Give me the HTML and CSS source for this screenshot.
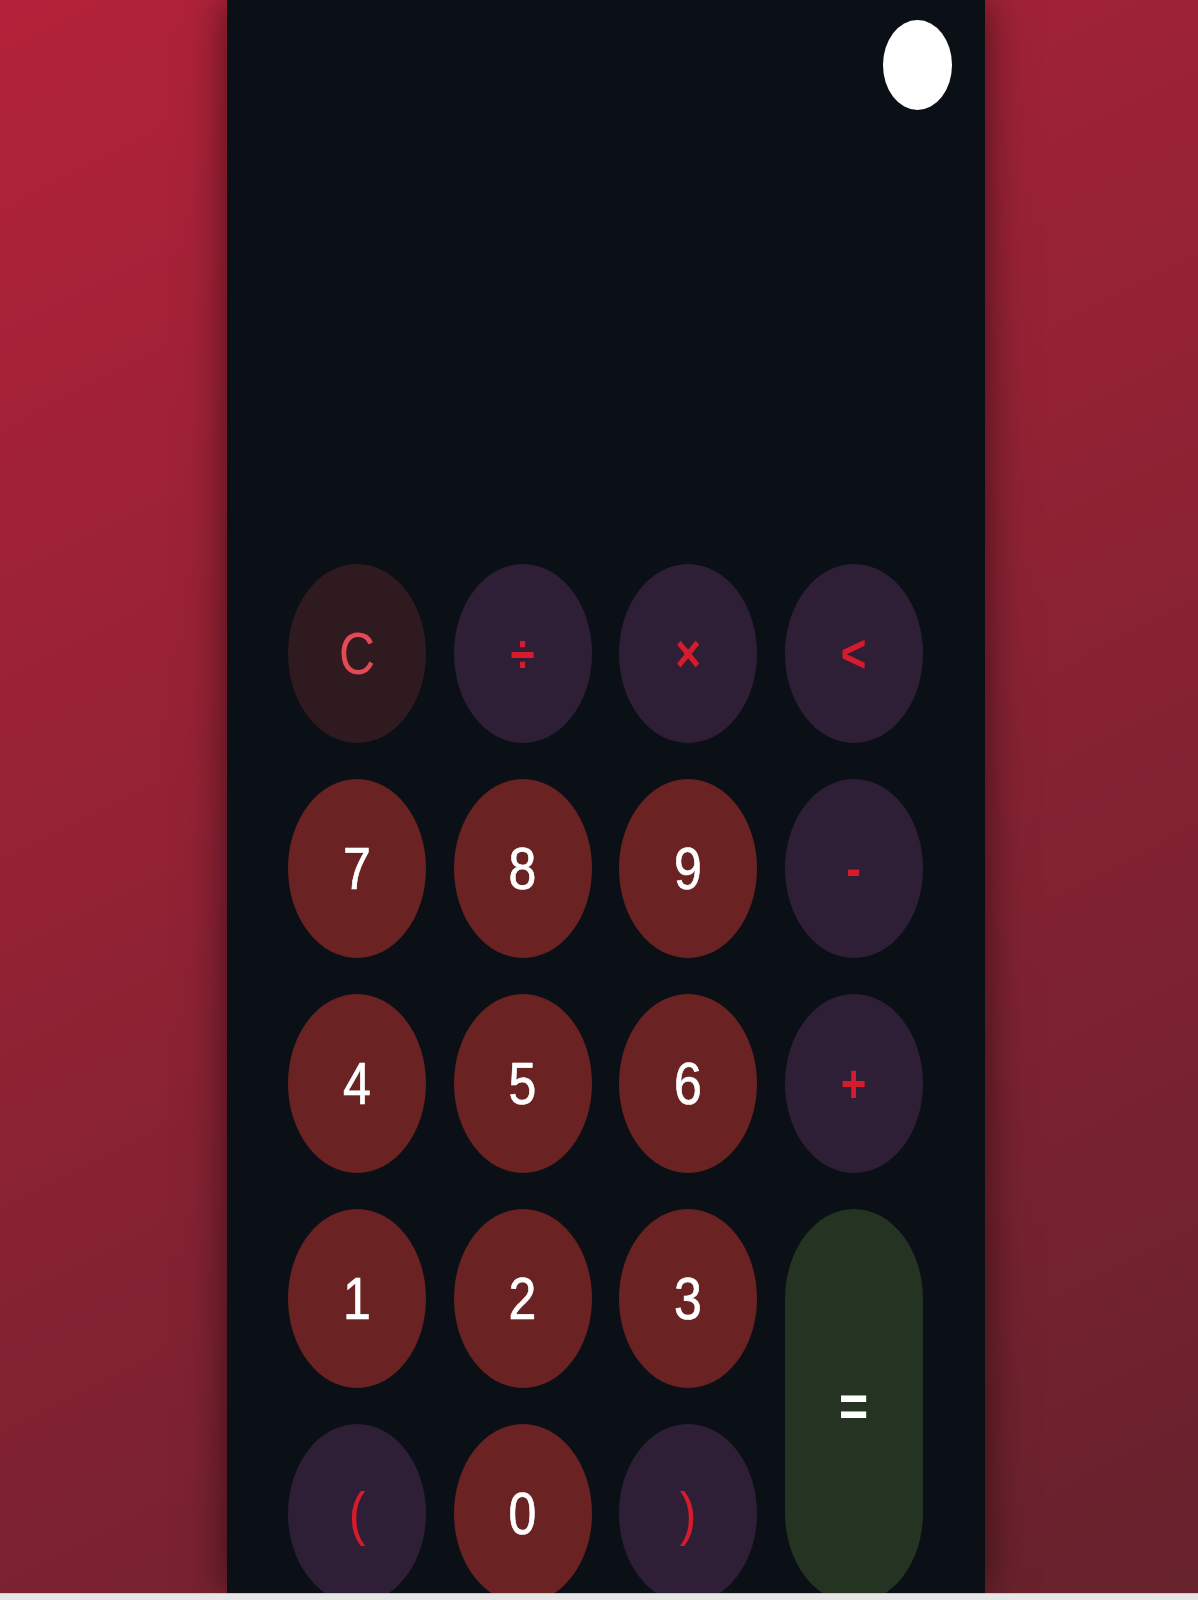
FILE: index.html
```html
<!DOCTYPE html>
<html lang="en">
<head>
<meta charset="utf-8">
<title>Calculator</title>
<link rel="stylesheet" href="styles.css">
</head>
<body>
<div class="page">
  <main class="calc">
    <div class="display">
      <span class="toggle"></span>
    </div>
    <div class="keys">
      <button class="key clear"><span>C</span></button>
      <button class="key op bold"><span>÷</span></button>
      <button class="key op bold"><span>×</span></button>
      <button class="key op bold"><span>&lt;</span></button>

      <button class="key num"><span>7</span></button>
      <button class="key num"><span>8</span></button>
      <button class="key num"><span>9</span></button>
      <button class="key op bold"><span>-</span></button>

      <button class="key num"><span>4</span></button>
      <button class="key num"><span>5</span></button>
      <button class="key num"><span>6</span></button>
      <button class="key op bold"><span>+</span></button>

      <button class="key num"><span>1</span></button>
      <button class="key num"><span>2</span></button>
      <button class="key num"><span>3</span></button>
      <button class="key equals"><span>=</span></button>

      <button class="key op"><span>(</span></button>
      <button class="key num"><span>0</span></button>
      <button class="key op"><span>)</span></button>
    </div>
  </main>
</div>
<div class="strip"></div>
</body>
</html>
```
FILE: styles.css
```css
html, body {
  margin: 0;
  padding: 0;
}

body {
  background: #e6e6e6;
  font-family: "Liberation Sans", Arial, sans-serif;
  overflow: hidden;
}

.page {
  height: 1593px;
  overflow: hidden;
  background: linear-gradient(153deg, #b3223a 0%, #66222d 100%);
}

.calc {
  margin-left: 227px;
  width: 758px;
  height: 1593px;
  background: #0a1016;
  box-shadow: 0 0 40px rgba(0, 0, 0, 0.55);
  overflow: hidden;
}

.display {
  height: 564px;
  box-sizing: border-box;
  display: flex;
  justify-content: flex-end;
  align-items: flex-start;
  padding: 20px 33px 0 0;
}

.toggle {
  display: block;
  width: 69px;
  height: 90px;
  border-radius: 50%;
  background: #ffffff;
}

.keys {
  display: grid;
  grid-template-columns: repeat(4, 138px);
  grid-auto-rows: 179px;
  column-gap: 27.5px;
  row-gap: 36px;
  padding-left: 61px;
}

.key {
  border: none;
  margin: 0;
  padding: 0;
  border-radius: 50%;
  display: flex;
  align-items: center;
  justify-content: center;
  font-family: "Liberation Sans", Arial, sans-serif;
  font-size: 50px;
  line-height: 1;
  cursor: pointer;
}

.key span {
  display: inline-block;
  transform: scaleY(1.2);
}

.num {
  background: #6b2222;
  color: #ffffff;
  -webkit-text-stroke: 0.6px #ffffff;
}

.op {
  background: #2e1f37;
  color: #d41c2c;
}

.bold {
  font-size: 44px;
  font-weight: 700;
}

.clear {
  background: #2f1a1f;
  color: #e24a57;
}

.equals {
  grid-column: 4;
  grid-row: 4 / span 2;
  border-radius: 69px / 90px;
  background: #243322;
  color: #ffffff;
  font-weight: 700;
}

.strip {
  height: 7px;
  background: #e6e6e6;
  border-top: 1px solid #c9c9c9;
}
```
